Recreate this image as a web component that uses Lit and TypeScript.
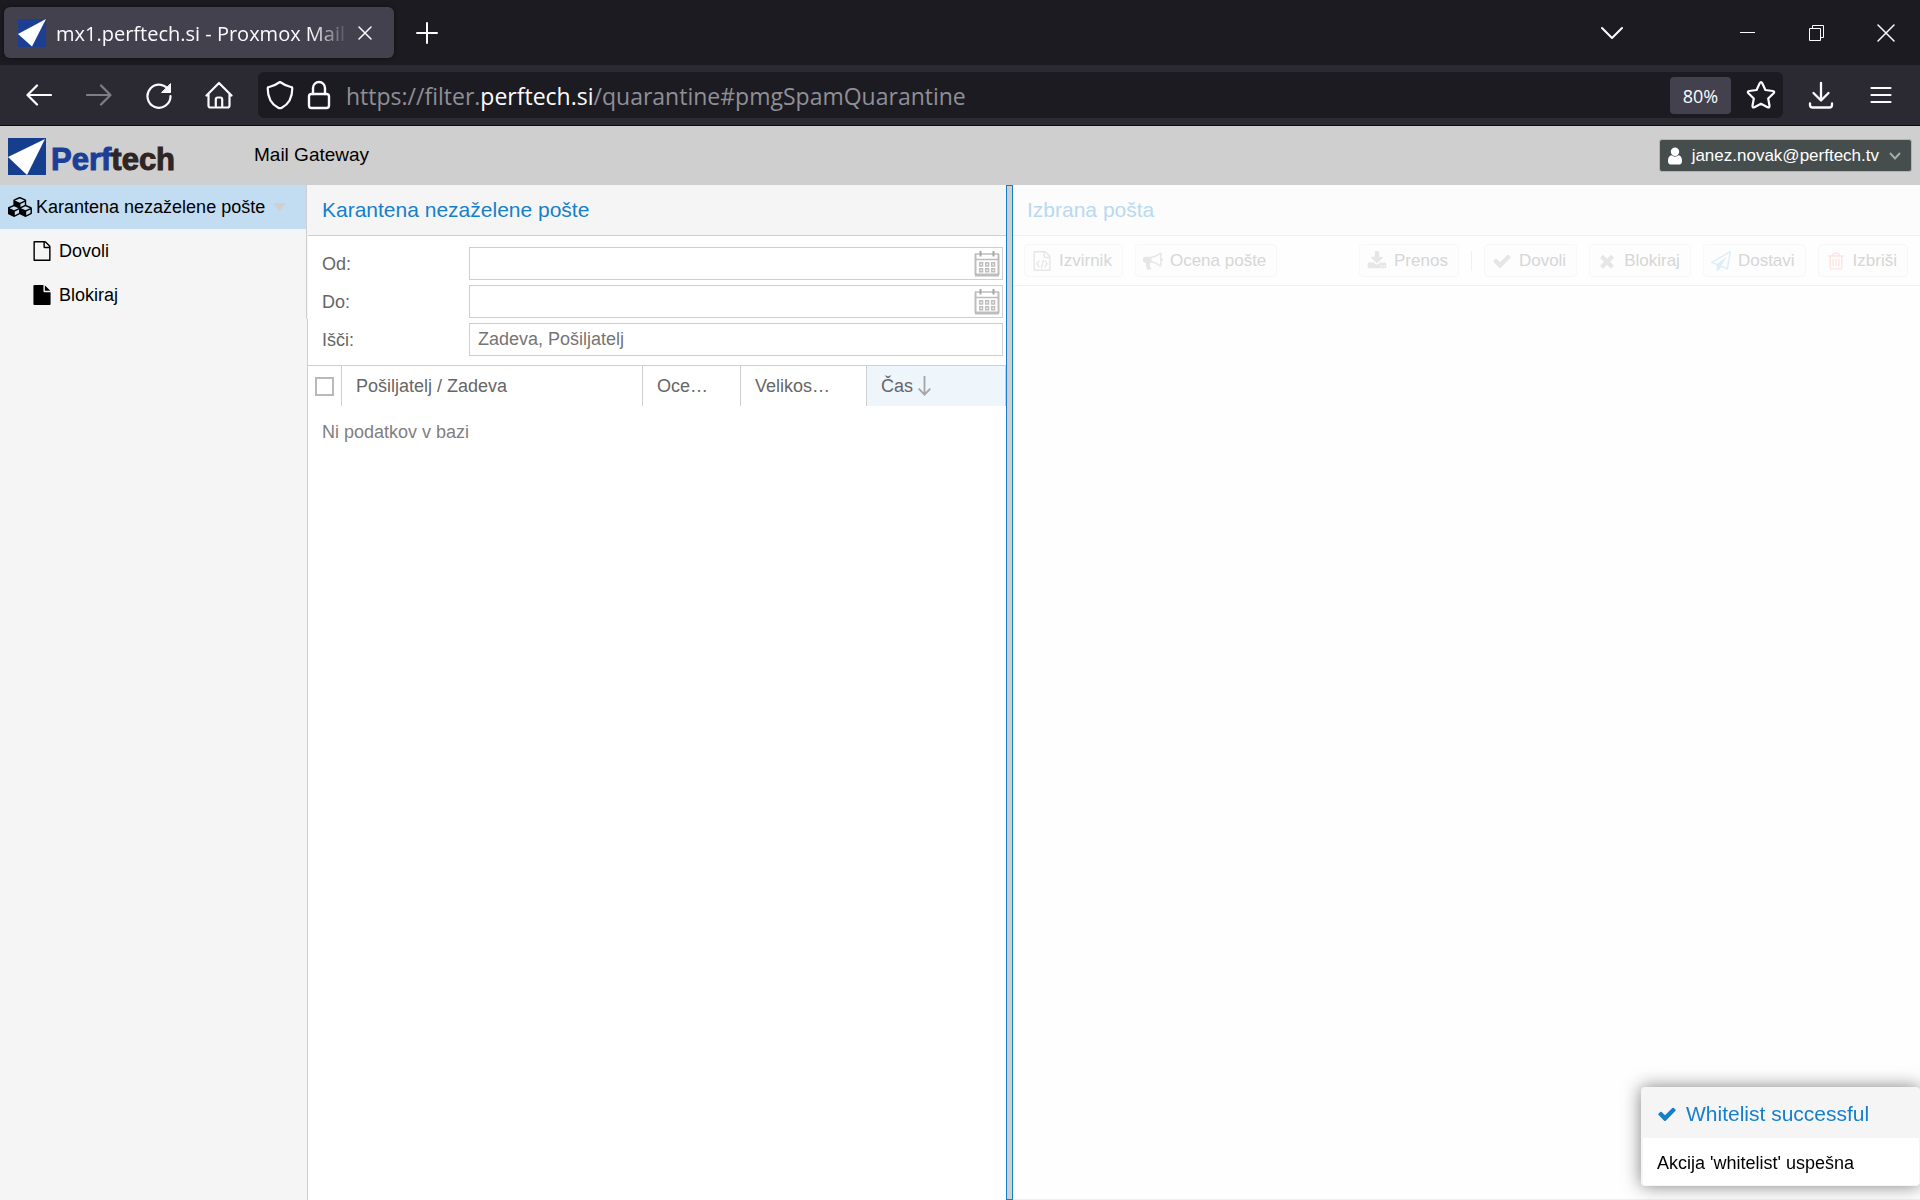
import { LitElement, html, css, svg } from "lit";
import { customElement } from "lit/decorators.js";

const fa = (box: string, d: string) =>
  html`<svg class="icon" viewBox=${box} aria-hidden="true">${svg`<path d=${d} fill="currentColor"/>`}</svg>`;

const CHECK =
  "M1671 566q0 40-28 68l-724 724-136 136q-28 28-68 28t-68-28l-136-136-362-362q-28-28-28-68t28-68l136-136q28-28 68-28t68 28l294 295 656-657q28-28 68-28t68 28l136 136q28 28 28 68z";
const TIMES =
  "M1490 1322q0 40-28 68l-136 136q-28 28-68 28t-68-28l-294-294-294 294q-28 28-68 28t-68-28l-136-136q-28-28-28-68t28-68l294-294-294-294q-28-28-28-68t28-68l136-136q28-28 68-28t68 28l294 294 294-294q28-28 68-28t68 28l136 136q28 28 28 68t-28 68l-294 294 294 294q28 28 28 68z";
const USER =
  "M1536 1399q0 109-62.5 187t-150.5 78h-854q-88 0-150.5-78t-62.5-187q0-85 8.5-160.5t31.5-152 58.5-131 94-89 134.5-34.5q131 128 313 128t313-128q76 0 134.5 34.5t94 89 58.5 131 31.5 152 8.5 160.5zm-256-887q0 159-112.5 271.5t-271.5 112.5-271.5-112.5-112.5-271.5 112.5-271.5 271.5-112.5 271.5 112.5 112.5 271.5z";
const FILE_O =
  "M1596 380q28 28 48 76t20 88v1152q0 40-28 68t-68 28h-1344q-40 0-68-28t-28-68v-1600q0-40 28-68t68-28h896q40 0 88 20t76 48zm-444-244v376h376q-10-29-22-41l-313-313q-12-12-41-22zm384 1528v-1024h-416q-40 0-68-28t-28-68v-416h-768v1536h1280z";
const FILE =
  "M1152 512v-472q22 14 36 28l408 408q14 14 28 36h-472zm-128 32q0 40 28 68t68 28h544v1056q0 40-28 68t-68 28h-1344q-40 0-68-28t-28-68v-1600q0-40 28-68t68-28h800v544z";
const CODE =
  "M608 830l95 72-195 250 195 250-95 72-250-322zM1184 830l-95 72 195 250-195 250 95 72 250-322zM960 790l112 20-170 740-112-22z";
const DOWNLOAD =
  "M1344 1344q0-26-19-45t-45-19-45 19-19 45 19 45 45 19 45-19 19-45zm256 0q0-26-19-45t-45-19-45 19-19 45 19 45 45 19 45-19 19-45zm128-224v320q0 40-28 68t-68 28h-1472q-40 0-68-28t-28-68v-320q0-40 28-68t68-28h465l135 136q58 56 136 56t136-56l136-136h464q40 0 68 28t28 68zm-325-569q17 41-14 70l-448 448q-18 19-45 19t-45-19l-448-448q-31-29-14-70 17-39 59-39h256v-448q0-26 19-45t45-19h256q26 0 45 19t19 45v448h256q42 0 59 39z";
const BULLHORN =
  "M1664 640q53 0 90.5 37.5t37.5 90.5-37.5 90.5-90.5 37.5v384q0 52-38 90t-90 38q-417-347-812-380-58 19-91 66t-31 100.5 40 92.5q-20 33-23 65.5t6 58 33.5 55 48 50 61.5 50.5q-29 58-111.5 83t-168.5 11.5-132-55.5q-7-23-29.5-87.5t-32-94.5-23-89-15-101 3.5-98.5 22-110.5h-122q-66 0-113-47t-47-113v-192q0-66 47-113t113-47h480q435 0 896-384 52 0 90 38t38 90v384zm-128 604v-954q-394 302-768 343v270q377 42 768 341z";
const TRASH =
  "M704 736v576q0 14-9 23t-23 9h-64q-14 0-23-9t-9-23v-576q0-14 9-23t23-9h64q14 0 23 9t9 23zm256 0v576q0 14-9 23t-23 9h-64q-14 0-23-9t-9-23v-576q0-14 9-23t23-9h64q14 0 23 9t9 23zm256 0v576q0 14-9 23t-23 9h-64q-14 0-23-9t-9-23v-576q0-14 9-23t23-9h64q14 0 23 9t9 23zm128 724v-948h-896v948q0 22 7 40.5t14.5 27 10.5 8.5h832q3 0 10.5-8.5t14.5-27 7-40.5zm-672-1076h448l-48-117q-7-9-17-11h-317q-10 2-17 11zm928 32v64q0 14-9 23t-23 9h-96v948q0 83-47 143.5t-113 60.5h-832q-66 0-113-58.5t-47-141.5v-952h-96q-14 0-23-9t-9-23v-64q0-14 9-23t23-9h309l70-167q15-37 54-63t79-26h320q40 0 79 26t54 63l70 167h309q14 0 23 9t9 23z";
const PLANE =
  "M1764 11q33 24 27 64l-256 1536q-5 29-32 45-14 8-31 8-11 0-24-5l-527-215-298 327q-18 21-47 21-14 0-23-4-19-7-30-23.5t-11-36.5v-452l-472-193q-37-14-40-55-3-39 32-59l1664-960q35-21 68 2zm-342 1499l221-1323-1434 827 336 137 863-639-478 797z";
const CUBES =
  "M640 1632l384-192v-314l-384 164v342zm-64-454l404-173-404-173-404 173zm1088 454l384-192v-314l-384 164v342zm-64-454l404-173-404-173-404 173zm-448-293l384-165v-266l-384 164v267zm-64-379l441-189-441-189-441 189zm1088 518v416q0 36-19 67t-52 47l-448 224q-25 14-57 14t-57-14l-448-224q-4-2-7-4-2 2-7 4l-448 224q-25 14-57 14t-57-14l-448-224q-33-16-52-47t-19-67v-416q0-38 21.5-70t56.5-48l434-186v-400q0-38 21.5-70t56.5-48l448-192q23-10 50-10t50 10l448 192q35 16 56.5 48t21.5 70v400l434 186q36 16 57 48t21 70z";

const SQ = "0 0 1792 1792";

const iconStyles = css`
  :host {
    display: block;
    box-sizing: border-box;
  }
  *,
  *::before {
    box-sizing: border-box;
  }
  svg {
    display: block;
    flex: none;
  }
  button,
  input {
    font: inherit;
    color: inherit;
    margin: 0;
  }
  button {
    background: none;
    border: 0;
    padding: 0;
    display: flex;
    align-items: center;
    justify-content: center;
  }
  h1,
  h2,
  p,
  ul {
    margin: 0;
    padding: 0;
    font-weight: 400;
    list-style: none;
  }
`;

@customElement("browser-chrome")
export class BrowserChrome extends LitElement {
  static styles = [
    iconStyles,
    css`
      :host {
        font-family: "Open Sans", "Noto Sans", sans-serif;
        color: #fbfbfe;
        background: #1c1b22;
        border-bottom: 1px solid #0c0c0d;
      }
      .line {
        fill: none;
        stroke: currentColor;
        stroke-linecap: round;
        stroke-linejoin: round;
      }
      .tabs {
        height: 65px;
        display: flex;
        align-items: center;
        padding-left: 4px;
      }
      .tab {
        width: 390px;
        height: 51px;
        display: flex;
        align-items: center;
        padding: 0 14px;
        border-radius: 6px;
        background: #42414d;
        box-shadow: 0 0 4px rgba(0, 0, 0, 0.5);
      }
      .caption {
        width: 303px;
        padding: 2px 0 0 10px;
        overflow: hidden;
        white-space: nowrap;
        font-size: 20px;
        line-height: 28px;
        -webkit-mask-image: linear-gradient(to right, #000 265px, transparent 303px);
        mask-image: linear-gradient(to right, #000 265px, transparent 303px);
      }
      .close {
        margin-left: 9px;
      }
      .new {
        width: 66px;
        height: 48px;
      }
      .window {
        display: flex;
        margin-left: auto;
      }
      .window button {
        width: 69px;
        height: 65px;
      }
      .window .list {
        width: 60px;
        margin-right: 71px;
      }
      .bar {
        height: 60px;
        display: flex;
        align-items: center;
        gap: 10px;
        padding: 0 14px;
        background: #2b2a33;
      }
      .nav {
        width: 50px;
        height: 46px;
      }
      .nav.off {
        opacity: 0.4;
      }
      .address {
        flex: 1;
        height: 46px;
        margin-left: 4px;
        margin-right: 3px;
        display: flex;
        align-items: center;
        padding: 0 7px 0 8px;
        border-radius: 6px;
        background: #1c1b22;
      }
      .lock {
        margin: 0 14px 0 12px;
      }
      .url {
        flex: 1;
        padding-top: 2px;
        font-size: 23px;
        line-height: 32px;
        color: #8f8f96;
        white-space: nowrap;
      }
      .url b {
        font-weight: 400;
        color: #fbfbfe;
      }
      .zoom {
        width: 61px;
        height: 37px;
        padding-top: 2px;
        border-radius: 4px;
        background: #42414d;
        font-size: 18px;
        margin-right: 15px;
      }
    `,
  ];

  render() {
    return html`
      <div class="tabs">
        <div class="tab">
          <svg width="28" height="28" viewBox="0 0 28 28"><rect width="28" height="28" fill="#1c3f94" /><path d="M28 0L14 27.500 0 15z" fill="#fff" /></svg>
          <span class="caption">mx1.perftech.si - Proxmox Mail Gateway</span>
          <button class="close" aria-label="Close tab">
            <svg class="line" width="14" height="14" viewBox="0 0 14 14" stroke-width="1.5"><path d="M1 1l12 12M13 1L1 13" /></svg>
          </button>
        </div>
        <button class="new" aria-label="New tab">
          <svg class="line" width="22" height="22" viewBox="0 0 22 22" stroke-width="2"><path d="M11 1v20M1 11h20" /></svg>
        </button>
        <div class="window">
          <button class="list" aria-label="List all tabs">
            <svg class="line" width="22" height="14" viewBox="0 0 22 14" stroke-width="2"><path d="M1 2l10 10L21 2" /></svg>
          </button>
          <button aria-label="Minimize">
            <svg width="16" height="16" viewBox="0 0 16 16"><path d="M0 7h15v1H0z" fill="currentColor" /></svg>
          </button>
          <button aria-label="Restore">
            <svg width="16" height="16" viewBox="0 0 16 16" fill="none" stroke="currentColor"><path d="M.5 3.500h11v12H.5zM3.500 3.500v-3h11v12h-3" /></svg>
          </button>
          <button aria-label="Close">
            <svg class="line" width="18" height="18" viewBox="0 0 18 18" stroke-width="1.5"><path d="M1 1l16 16M17 1L1 17" /></svg>
          </button>
        </div>
      </div>
      <div class="bar">
        <button class="nav" aria-label="Back">
          <svg class="line" width="26" height="22" viewBox="0 0 26 22" stroke-width="2.200"><path d="M25 11H2M11 1.500L1.500 11l9.500 9.500" /></svg>
        </button>
        <button class="nav off" aria-label="Forward" disabled>
          <svg class="line" width="26" height="22" viewBox="0 0 26 22" stroke-width="2.200"><path d="M1 11h23M15 1.500l9.500 9.500-9.500 9.500" /></svg>
        </button>
        <button class="nav" aria-label="Reload">
          <svg class="line" width="28" height="28" viewBox="0 0 28 28" stroke-width="2.200"><path d="M24.500 10.500A11.500 11.500 0 1 0 25.500 15" /><path d="M25.500 3v8.500H17z" fill="currentColor" stroke-width="1" /></svg>
        </button>
        <button class="nav" aria-label="Home">
          <svg class="line" width="28" height="28" viewBox="0 0 28 28" stroke-width="2.200"><path d="M1.500 14.500L14 2l12.500 12.500M3.500 13v11.500q0 2 2 2h17q2 0 2-2V13M10.800 26v-7.500q0-2 2-2h2.400q2 0 2 2V26" /></svg>
        </button>
        <div class="address">
          <svg class="line" width="28" height="30" viewBox="0 0 28 30" stroke-width="2.200"><path d="M14 2c3.500 2.500 7.500 4.300 11.500 5.200.5 0 .8.500.8 1 0 9-3.800 16-10.500 19.500q-1.800 1-3.600 0C5.500 24.200 1.700 17.200 1.700 8.200c0-.5.300-1 .8-1C6.500 6.300 10.500 4.500 14 2z" /></svg>
          <svg class="line lock" width="26" height="30" viewBox="0 0 26 30" stroke-width="2.400"><rect x="3" y="14" width="20" height="14" rx="2.500" /><path d="M7 14V8a6 6 0 0 1 12 0v6" /></svg>
          <span class="url">https://filter.<b>perftech.si</b>/quarantine#pmgSpamQuarantine</span>
          <button class="zoom">80%</button>
          <button aria-label="Bookmark">
            <svg class="line" width="30" height="30" viewBox="0 0 30 30" stroke-width="2.200"><path d="M13.700 3.300q1.300-2.200 2.600 0L19.400 10l7.400 1q2.300.5.800 2.300L22.200 18.500l1.300 7.200q.2 2.400-1.900 1.500L15 23.800l-6.600 3.400q-2.100.9-1.900-1.500l1.300-7.200L2.400 13.300q-1.500-1.800.8-2.300l7.400-1z" /></svg>
          </button>
        </div>
        <button class="nav" aria-label="Downloads">
          <svg class="line" width="26" height="28" viewBox="0 0 26 28" stroke-width="2.300"><path d="M13 2v17M5.500 12l7.500 7.500 7.500-7.500M2 22.500v1.500q0 2.500 2.500 2.500h17q2.500 0 2.500-2.500v-1.500" /></svg>
        </button>
        <button class="nav" aria-label="Menu">
          <svg class="line" width="22" height="18" viewBox="0 0 22 18" stroke-width="2.200"><path d="M1.500 2h19M1.500 9h19M1.500 16h19" /></svg>
        </button>
      </div>
    `;
  }
}

const calendar = html`<svg width="26" height="26" viewBox="0 0 26 26" fill="none" stroke="#bdbdbd"><path d="M1.500 3v21M24.500 3v21" stroke-width="2" /><path d="M1 3h24M1 8.500h24" stroke-width="1.500" /><path d="M1 24h24" stroke-width="3" /><path d="M6.500 0v5.500M19.500 0v5.500" stroke-width="2" stroke="#a8a8a8" /><path d="M5.700 11.700h2.800v3.300H5.700zM11.700 11.700h2.800v3.300h-2.800zM17.700 11.700h2.800v3.300h-2.800zM5.700 17.700h2.800v3H5.700zM11.700 17.700h2.800v3h-2.800zM17.700 17.700h2.800v3h-2.800z" stroke-width="1.500" /></svg>`;

@customElement("quarantine-list")
export class QuarantineList extends LitElement {
  static styles = [
    iconStyles,
    css`
      :host {
        color: #666;
        background: #fff;
        min-width: 0;
      }
      .title {
        height: 51px;
        padding: 0 14px;
        font-size: 21px;
        line-height: 50px;
        color: #157fcc;
        background: #f5f5f5;
        border-bottom: 1px solid #cfcfcf;
      }
      .filters {
        display: grid;
        gap: 5px;
        padding: 11px 3px 9px 14px;
      }
      .row {
        display: flex;
        align-items: center;
        height: 33px;
      }
      .row label {
        width: 147px;
        padding-top: 2px;
      }
      .field {
        flex: 1;
        height: 33px;
        display: flex;
        align-items: center;
        border: 1px solid #cfcfcf;
        background: #fff;
        padding-right: 2px;
      }
      .field input {
        flex: 1;
        min-width: 0;
        border: 0;
        outline: 0;
        background: none;
        padding: 0 8px;
      }
      .field input::placeholder {
        color: #757575;
        opacity: 1;
      }
      table {
        width: 100%;
        border-collapse: separate;
        border-spacing: 0;
        table-layout: fixed;
      }
      th {
        height: 41px;
        padding: 0 14px;
        border-top: 1px solid #cfcfcf;
        border-right: 1px solid #cfcfcf;
        font-weight: 400;
        text-align: left;
        white-space: nowrap;
      }
      .pick {
        width: 34px;
        padding: 0 7px;
      }
      .pick input {
        appearance: none;
        display: block;
        width: 19px;
        height: 19px;
        border: 2px solid #b9b9b9;
        background: #fff;
      }
      .score {
        width: 98px;
      }
      .size {
        width: 126px;
      }
      .time {
        width: 139px;
        background: #eef5fb;
      }
      .sort {
        display: flex;
        align-items: center;
        gap: 5px;
      }
      td {
        padding: 14px;
        line-height: 24px;
        color: #808080;
      }
    `,
  ];

  render() {
    return html`
      <h2 class="title">Karantena nezaželene pošte</h2>
      <form class="filters">
        <div class="row">
          <label for="from">Od:</label>
          <div class="field"><input id="from" type="text" /><button type="button" aria-label="Od">${calendar}</button></div>
        </div>
        <div class="row">
          <label for="to">Do:</label>
          <div class="field"><input id="to" type="text" /><button type="button" aria-label="Do">${calendar}</button></div>
        </div>
        <div class="row">
          <label for="search">Išči:</label>
          <div class="field"><input id="search" type="text" placeholder="Zadeva, Pošiljatelj" /></div>
        </div>
      </form>
      <table>
        <thead>
          <tr>
            <th class="pick"><input type="checkbox" aria-label="Izberi vse" /></th>
            <th>Pošiljatelj / Zadeva</th>
            <th class="score">Oce…</th>
            <th class="size">Velikos…</th>
            <th class="time">
              <span class="sort">Čas<svg width="13" height="20" viewBox="0 0 13 20" fill="none" stroke="#a5a5a5" stroke-width="1.800"><path d="M6.500 0v18.500M.7 12.700l5.800 6 5.800-6" /></svg></span>
            </th>
          </tr>
        </thead>
        <tbody>
          <tr><td colspan="5">Ni podatkov v bazi</td></tr>
        </tbody>
      </table>
    `;
  }
}

@customElement("mail-preview")
export class MailPreview extends LitElement {
  static styles = [
    iconStyles,
    css`
      :host {
        background: #fefefe;
        border-bottom: 1px solid #f0f0f0;
        min-width: 0;
      }
      .title {
        height: 51px;
        padding: 0 14px;
        font-size: 21px;
        line-height: 50px;
        color: #b9d9f0;
        background: #fcfcfc;
        border-bottom: 1px solid #f0f0f0;
      }
      .tools {
        height: 50px;
        display: flex;
        align-items: center;
        gap: 12px;
        padding: 0 12px 0 11px;
        border-bottom: 1px solid #f0f0f0;
        font-size: 17px;
      }
      .tools button {
        height: 33px;
        gap: 7px;
        padding: 0 10px 0 7px;
        border: 1px solid #f7f7f7;
        border-radius: 4px;
        color: #d6d6d6;
        background: #fdfdfd;
        white-space: nowrap;
      }
      .icon {
        width: 20px;
        height: 20px;
        color: #e6e6e6;
      }
      .blue .icon {
        color: #dceefa;
      }
      .red .icon {
        color: #ffe4e1;
      }
      .gap {
        flex: 1;
      }
      .rule {
        width: 1px;
        height: 20px;
        background: #f0f0f0;
      }
    `,
  ];

  render() {
    return html`
      <h2 class="title">Izbrana pošta</h2>
      <div class="tools">
        <button disabled>${fa(SQ, FILE_O + CODE)}Izvirnik</button>
        <button disabled>${fa(SQ, BULLHORN)}Ocena pošte</button>
        <span class="gap"></span>
        <button disabled>${fa(SQ, DOWNLOAD)}Prenos</button>
        <span class="rule"></span>
        <button disabled>${fa(SQ, CHECK)}Dovoli</button>
        <button disabled>${fa(SQ, TIMES)}Blokiraj</button>
        <button class="blue" disabled>${fa(SQ, PLANE)}Dostavi</button>
        <button class="red" disabled>${fa(SQ, TRASH)}Izbriši</button>
      </div>
    `;
  }
}

@customElement("app-root")
export class AppRoot extends LitElement {
  static styles = [
    iconStyles,
    css`
      :host {
        display: flex;
        flex-direction: column;
        min-height: 100vh;
        font-family: "Liberation Sans", Arial, sans-serif;
        font-size: 18px;
        color: #000;
      }
      .header {
        height: 59px;
        display: flex;
        align-items: center;
        padding: 0 8px;
        background: #cfcfcf;
      }
      .product {
        margin-left: 76px;
        padding-bottom: 2px;
        font-size: 19px;
        line-height: 24px;
      }
      .account {
        height: 33px;
        margin-left: auto;
        gap: 10px;
        padding: 0 10px 0 8px;
        border: 1px solid #a3bab5;
        border-radius: 3px;
        background: #464d4d;
        color: #fff;
        font-size: 17px;
      }
      .account .icon {
        width: 14px;
        height: 18px;
      }
      .body {
        flex: 1;
        display: grid;
        grid-template-columns: 308px 698fr 7px 907fr;
      }
      .side {
        background: #f5f5f5;
        display: flex;
        flex-direction: column;
      }
      .tree {
        margin-right: 1px;
        padding-bottom: 2px;
        border-right: 1px solid #cfcfcf;
      }
      .tree a {
        height: 44px;
        display: flex;
        align-items: center;
        color: inherit;
        text-decoration: none;
      }
      .tree .root {
        gap: 3px;
        padding-left: 8px;
        background: #c2ddf2;
      }
      .tree .root .icon {
        width: 25px;
        height: 20px;
      }
      .tree .leaf {
        gap: 8px;
        padding-left: 33px;
      }
      .tree .leaf .icon {
        width: 18px;
        height: 20px;
      }
      .caret {
        margin-left: 5px;
      }
      .rest {
        flex: 1;
        border-right: 1px solid #cfcfcf;
      }
      .split {
        background: #cfcfcf;
        border: 1px solid #157fcc;
      }
      .toast {
        position: fixed;
        right: 0;
        bottom: 14px;
        width: 279px;
        border: 1px solid #f5f5f5;
        border-left-width: 2px;
        border-radius: 4px;
        background: #fff;
        box-shadow: 0 0 18px rgba(0, 0, 0, 0.5);
      }
      .toast h2 {
        display: flex;
        align-items: center;
        gap: 9px;
        height: 50px;
        padding: 2px 14px 0;
        background: #f5f5f5;
        color: #157fcc;
        font-size: 21px;
      }
      .toast .icon {
        width: 20px;
        height: 20px;
      }
      .toast p {
        padding: 13px 14px 10px;
        line-height: 24px;
      }
    `,
  ];

  render() {
    return html`
      <browser-chrome></browser-chrome>
      <header class="header">
        <svg width="170" height="40" viewBox="0 0 170 40" role="img" aria-label="Perftech">
          <rect y="2" width="38" height="37" fill="#163e8f" />
          <path d="M37 3L19 39 0 21z" fill="#fff" />
          <g font-family="Liberation Sans, sans-serif" font-weight="700" font-size="31" stroke-width="1">
            <text x="43" y="34" fill="#1b3f98" stroke="#1b3f98">Perf<tspan fill="#2e2524" stroke="#2e2524">tech</tspan></text>
          </g>
        </svg>
        <h1 class="product">Mail Gateway</h1>
        <button class="account">
          ${fa("256 128 1280 1536", USER)}
          janez.novak@perftech.tv
          <svg width="12" height="8" viewBox="0 0 12 8" fill="none" stroke="#a5abab" stroke-width="2"><path d="M1 1l5 5.500L11 1" /></svg>
        </button>
      </header>
      <main class="body">
        <nav class="side">
          <ul class="tree">
            <li>
              <a class="root" href="#pmgSpamQuarantine">
                ${fa("128 0 2048 1792", CUBES)}Karantena nezaželene pošte
                <svg class="caret" width="13" height="8" viewBox="0 0 13 8"><path d="M0 0h13L6.500 8z" fill="#cfcfcf" /></svg>
              </a>
            </li>
            <li><a class="leaf" href="#pmgWhitelist">${fa("128 0 1536 1792", FILE_O)}Dovoli</a></li>
            <li><a class="leaf" href="#pmgBlacklist">${fa("128 0 1536 1792", FILE)}Blokiraj</a></li>
          </ul>
          <div class="rest"></div>
        </nav>
        <quarantine-list></quarantine-list>
        <div class="split" role="separator"></div>
        <mail-preview></mail-preview>
      </main>
      <aside class="toast" role="status">
        <h2>${fa(SQ, CHECK)}Whitelist successful</h2>
        <p>Akcija 'whitelist' uspešna</p>
      </aside>
    `;
  }
}
